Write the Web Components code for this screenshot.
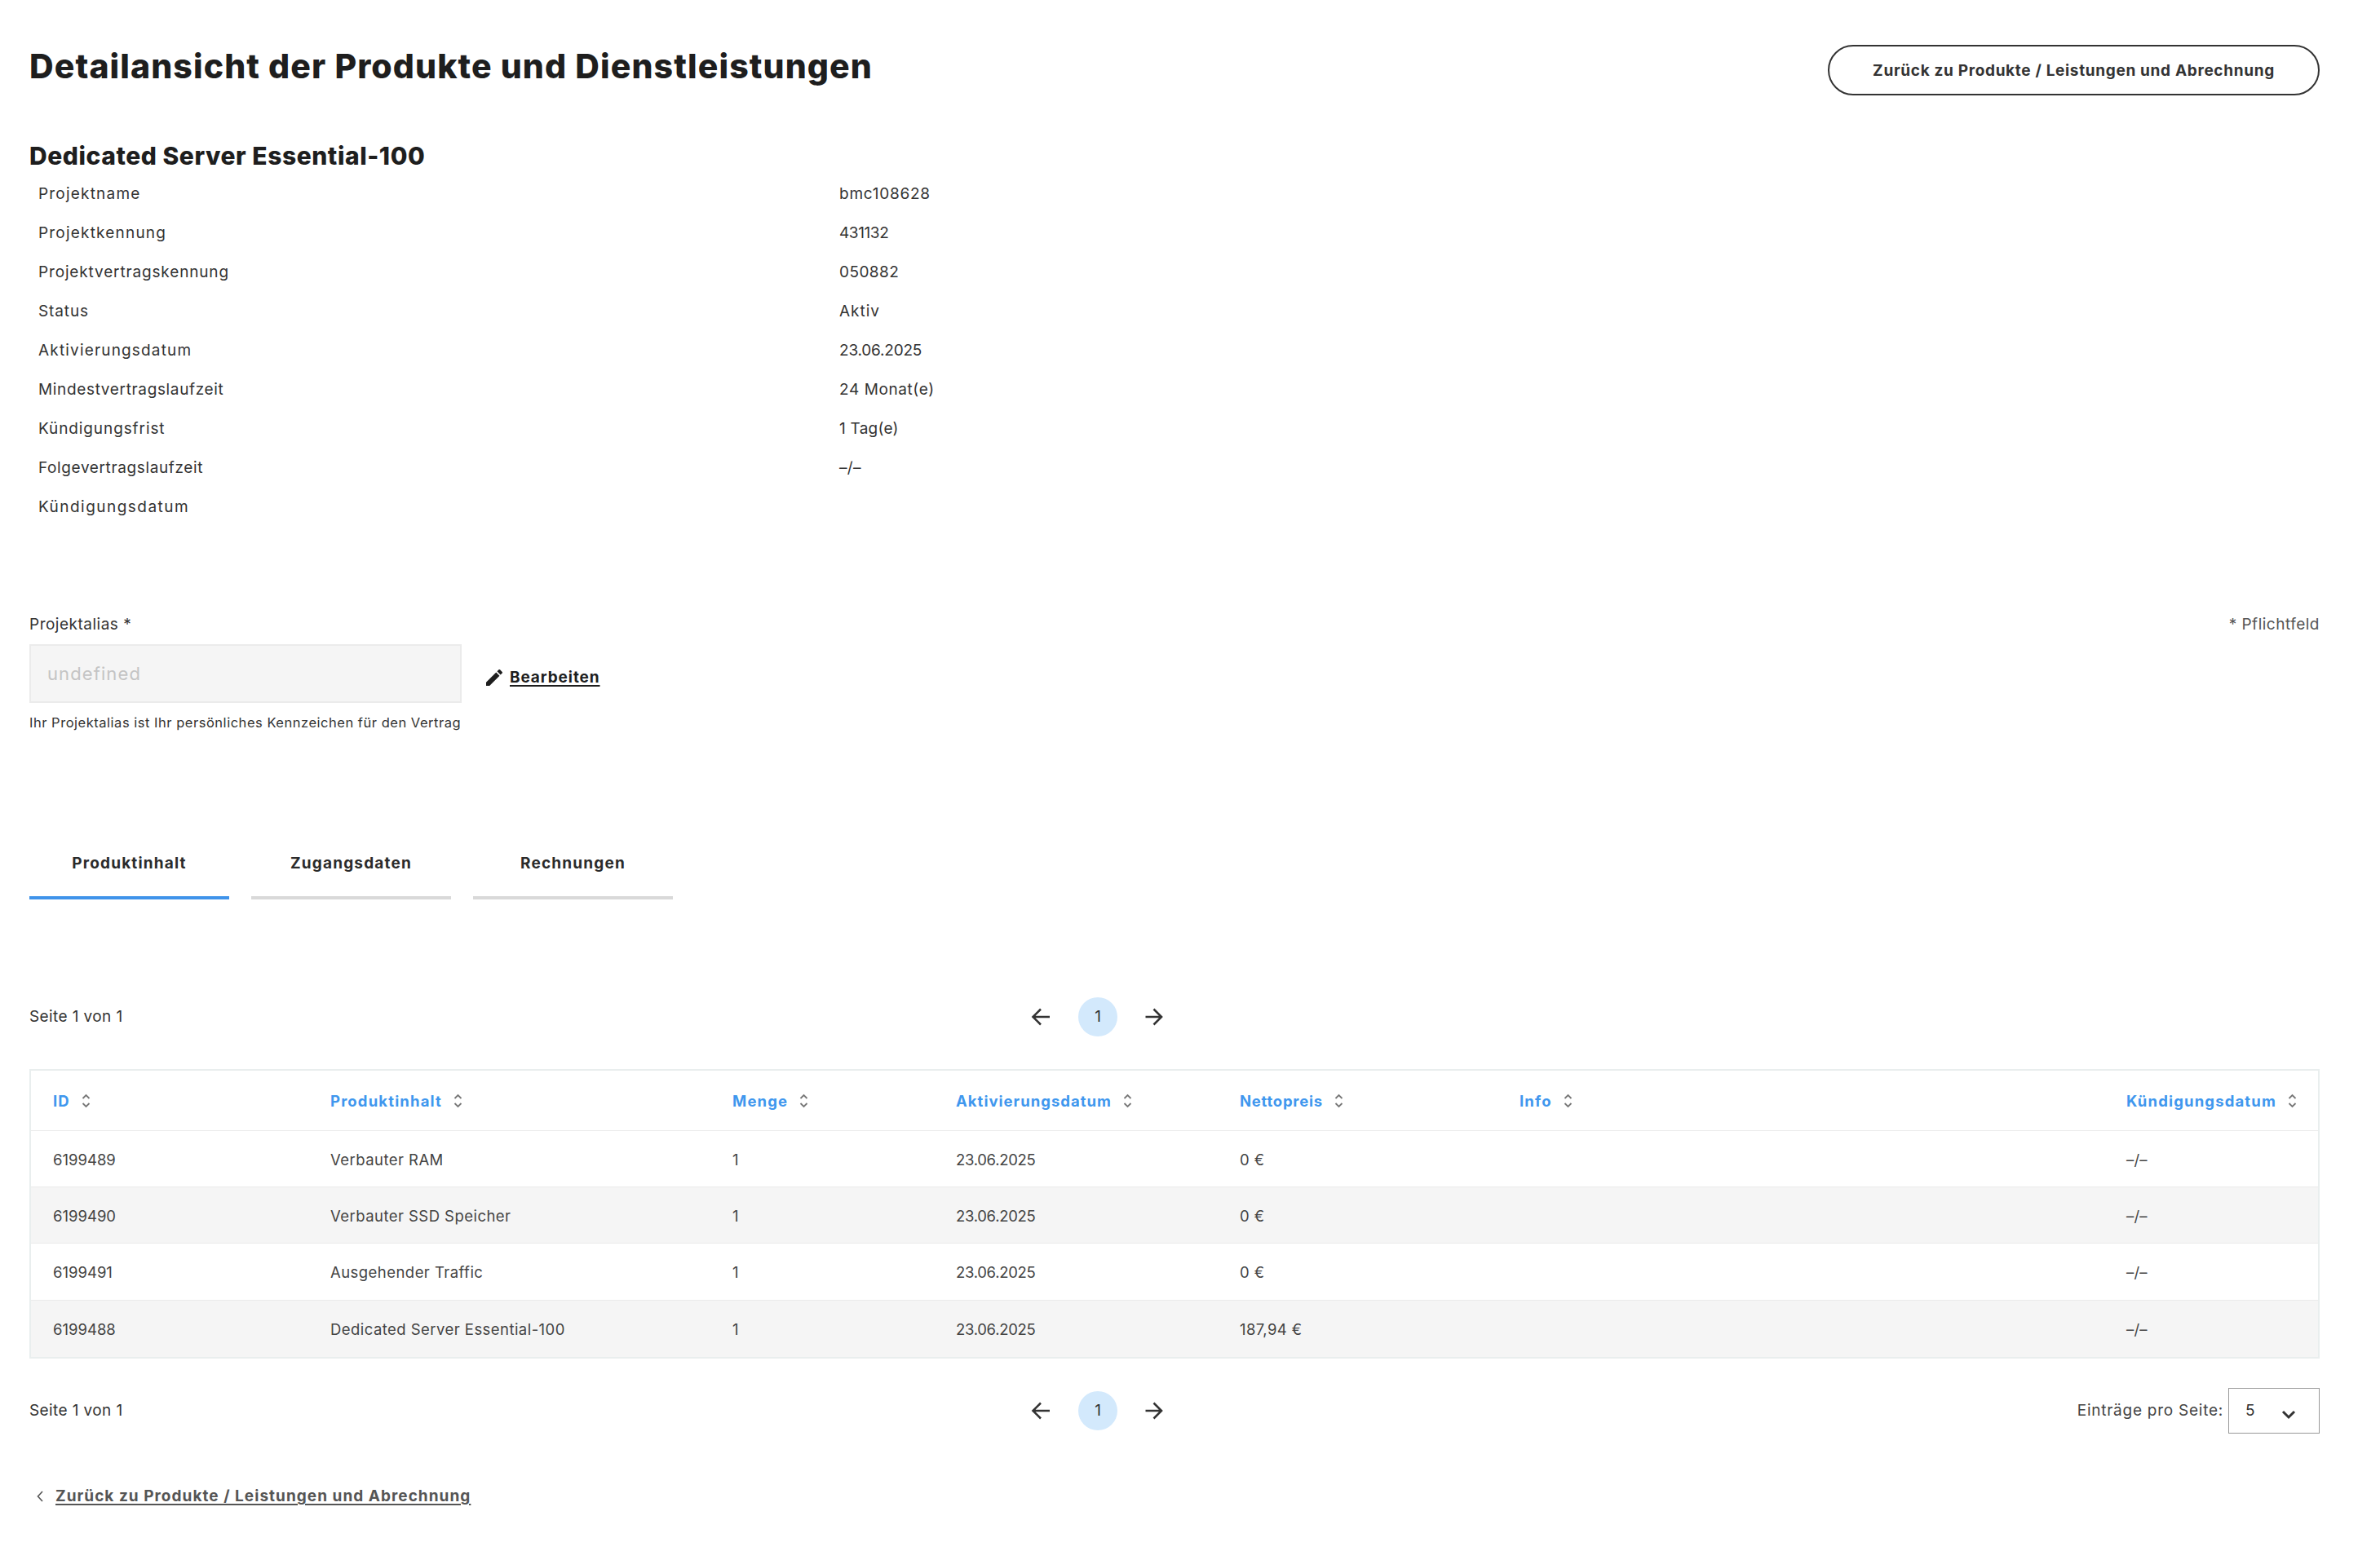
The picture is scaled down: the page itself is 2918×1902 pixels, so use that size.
<!doctype html>
<html lang="de"><head><meta charset="utf-8"><title>Detailansicht</title>
<style>
html,body{margin:0;background:#fff}
body{font:400 19px/30px Inter,"Liberation Sans",sans-serif;color:#333}
</style></head>
<body>
<app-page>
  <page-header slot="header" label="Zurück zu Produkte / Leistungen und Abrechnung">Detailansicht der Produkte und Dienstleistungen</page-header>
  <detail-list heading="Dedicated Server Essential-100">
    <detail-row label="Projektname" ll="1.2" lv=".75">bmc108628</detail-row>
    <detail-row label="Projektkennung" ll="1.2" lv="-.4">431132</detail-row>
    <detail-row label="Projektvertragskennung" ll=".85" lv=".45">050882</detail-row>
    <detail-row label="Status" ll=".9" lv="1">Aktiv</detail-row>
    <detail-row label="Aktivierungsdatum" ll="1.17" lv="-.2">23.06.2025</detail-row>
    <detail-row label="Mindestvertragslaufzeit" ll=".65" lv=".6">24 Monat(e)</detail-row>
    <detail-row label="Kündigungsfrist" ll=".9" lv=".25">1 Tag(e)</detail-row>
    <detail-row label="Folgevertragslaufzeit" ll=".62" lv=".3">–/–</detail-row>
    <detail-row label="Kündigungsdatum" ll="1.47" lv="0"></detail-row>
  </detail-list>
  <alias-field></alias-field>
  <tab-bar>
    <tab-item active>Produktinhalt</tab-item>
    <tab-item>Zugangsdaten</tab-item>
    <tab-item>Rechnungen</tab-item>
  </tab-bar>
  <pager-bar style="margin-top:120px"></pager-bar>
  <data-table></data-table>
  <pager-bar style="margin-top:36px" sizer></pager-bar>
  <back-link>Zurück zu Produkte / Leistungen und Abrechnung</back-link>
</app-page>
<script>
const def=(name,html,init)=>customElements.define(name,class extends HTMLElement{
  constructor(){super();this.attachShadow({mode:'open'}).innerHTML=typeof html==='function'?html(this):html}
  connectedCallback(){if(init&&!this._i){this._i=1;init(this,this.shadowRoot)}}
});
def('app-page',`<style>:host{display:block;box-sizing:border-box;width:2918px;padding:0 74px 40px 36px}</style><slot name="header"></slot><slot></slot>`);
def('page-header',`<style>
:host{display:flex;justify-content:space-between;align-items:flex-start;padding-top:55px;height:62px}
h1{margin:0;font:800 41px/52px Inter,sans-serif;letter-spacing:1.09px;color:#1e1e1e}
button{box-sizing:border-box;width:603px;height:62px;border:2px solid #333;border-radius:31px;background:#fff;color:#333;font:700 19px/1 Inter,sans-serif;letter-spacing:.67px;padding:1px 0 0}
</style><h1><slot></slot></h1><button></button>`,(e,s)=>{s.querySelector('button').textContent=e.getAttribute('label')});
def('detail-list',`<style>
:host{display:block;margin-top:55px}
h2{margin:0;height:41px;font:800 30px/39px Inter,sans-serif;letter-spacing:.55px;color:#1e1e1e}
</style><h2></h2><slot></slot>`,(e,s)=>{s.querySelector('h2').textContent=e.getAttribute('heading')});
def('detail-row',`<style>
:host{display:grid;grid-template-columns:982px 1fr;height:48px;align-items:center;padding-left:11px;color:#333}
span{padding-top:1px}
</style><span></span><span class="v"><slot></slot></span>`,(e,s)=>{const a=s.querySelector('span');a.textContent=e.getAttribute('label');a.style.letterSpacing=e.getAttribute('ll')+'px';s.querySelector('.v').style.letterSpacing=e.getAttribute('lv')+'px'});
def('alias-field',`<style>
:host{display:block;margin-top:105px}
.top{display:flex;justify-content:space-between;height:30px;line-height:31px;letter-spacing:.5px;margin-bottom:10px}
.top i{font-style:normal;color:#555}
.row{display:flex;align-items:center;gap:30px}
.inp{box-sizing:border-box;width:530px;height:72px;background:#f5f5f5;border:2px solid #ebebeb;padding:0 20px;font-size:22px;line-height:68px;letter-spacing:1.1px;color:#c4c4c4;margin:0}
a{display:flex;align-items:center;gap:9px;margin-top:10px;font-weight:700;color:#1e1e1e;letter-spacing:.9px}
a span{text-decoration:underline;text-underline-offset:3px;text-decoration-thickness:2px}
svg{width:20px;height:20px;fill:#1e1e1e;display:block}
.hint{font-size:16.500px;letter-spacing:.52px;line-height:30px;height:30px;margin-top:9px;color:#333}
</style>
<div class="top"><span>Projektalias *</span><i>* Pflichtfeld</i></div>
<div class="row"><div class="inp">undefined</div><a><svg viewBox="3 3 18 18"><path d="M3 17.25V21h3.75L17.81 9.94l-3.75-3.75L3 17.25zM20.71 7.04c.39-.39.39-1.02 0-1.41l-2.34-2.34c-.39-.39-1.02-.39-1.41 0l-1.83 1.83 3.75 3.75 1.83-1.83z"/></svg><span>Bearbeiten</span></a></div>
<div class="hint">Ihr Projektalias ist Ihr persönliches Kennzeichen für den Vertrag</div>`);
def('tab-bar',`<style>:host{display:flex;gap:27px;margin-top:119px}</style><slot></slot>`);
def('tab-item',`<style>
:host{display:flex;box-sizing:border-box;width:245px;height:83px;padding-bottom:1px;justify-content:center;align-items:center;border-bottom:4px solid #d9d9d9;font-weight:700;letter-spacing:1.17px;color:#2b2b2b}
:host([active]){border-bottom-color:#3f93ea}
</style><slot></slot>`);
const arrow=d=>`<svg viewBox="0 0 24 24" width="24" height="24"><path d="${d}" fill="none" stroke="#333" stroke-width="2.6"/></svg>`;
def('pager-bar',e=>`<style>
:host{display:grid;grid-template-columns:1224px auto 1fr;align-items:center;min-height:48px}
.s{letter-spacing:.4px;color:#333}
.w{display:flex;align-items:center;gap:30px}
.w>div{width:32px;height:48px;display:flex;align-items:center;justify-content:center}
.w>b{width:48px;height:48px;border-radius:50%;background:#d3e9fc;font-weight:400;display:flex;align-items:center;justify-content:center;color:#333}
.r{justify-self:end;display:flex;align-items:center;gap:6px;color:#444;letter-spacing:.75px}
.sel{box-sizing:border-box;width:112px;height:56px;border:1px solid #999;display:flex;align-items:center;justify-content:space-between;padding:0 28px 0 20px;letter-spacing:0;color:#333}
</style>
<div class="s">Seite 1 von 1</div>
<div class="w"><div>${arrow('M23 12H3M12 2.500 2.500 12l9.500 9.500')}</div><b>1</b><div>${arrow('M.5 12h19.500M10.500 2.500 20 12l-9.500 9.500')}</div></div>
${e.hasAttribute('sizer')?`<div class="r"><span>Einträge pro Seite:</span><div class="sel"><span>5</span><svg width="18" height="12" viewBox="0 0 18 12" style="margin-top:10px"><path d="M2 2l7 7 7-7" fill="none" stroke="#333" stroke-width="3"/></svg></div></div>`:''}`);
const sort=`<svg class="so" width="11" height="18" viewBox="0 0 11 18"><path d="M1.500 6 5.500 2 9.500 6M1.500 12l4 4 4-4" fill="none" stroke="#777" stroke-width="1.800"/></svg>`;
const cols=[["ID",340,1.15],["Produktinhalt",493,1.15],["Menge",274,1.15],["Aktivierungsdatum",348,1.02],["Nettopreis",343,.75],["Info",744,1.15],["Kündigungsdatum",262,1.15]];
const rows=[["6199489","Verbauter RAM","1","23.06.2025","0 €","","–/–"],["6199490","Verbauter SSD Speicher","1","23.06.2025","0 €","","–/–"],["6199491","Ausgehender Traffic","1","23.06.2025","0 €","","–/–"],["6199488","Dedicated Server Essential-100","1","23.06.2025","187,94 €","","–/–"]];
const hs=[69,69,70,69];
const ls=[0,.45,.5,-.3,.4,0,.2];
def('data-table',`<style>
:host{display:block;margin-top:40px}
table{box-sizing:border-box;width:2808px;table-layout:fixed;border-collapse:separate;border-spacing:0;border:2px solid #e9eeee}
th,td{padding:0 0 0 27px;text-align:left;box-sizing:border-box;white-space:nowrap}
th{height:74px;font-size:18.500px;font-weight:700;color:#3f97ee;border-bottom:1px solid #ebebeb}
th span{display:inline-flex;align-items:center;gap:14px}
td{font-size:18.500px;color:#444;padding-top:1px;border-bottom:1px solid #ebebeb}
tr:last-child td{border-bottom:0}
tbody tr:nth-child(even) td{background:#f5f5f5}
.so{display:block}
</style><table><colgroup>${cols.map(c=>`<col style="width:${c[1]}px">`).join('')}</colgroup><thead><tr>${cols.map(c=>`<th style="letter-spacing:${c[2]}px"><span>${c[0]}${sort}</span></th>`).join('')}</tr></thead><tbody>${rows.map((r,i)=>`<tr>${r.map((v,j)=>`<td style="height:${hs[i]}px;letter-spacing:${ls[j]}px">${v}</td>`).join('')}</tr>`).join('')}</tbody></table>`);
def('back-link',`<style>
:host{display:flex;align-items:center;height:30px;margin-top:62px;padding-left:9px;gap:15px;font-weight:700;color:#555;letter-spacing:1.03px}
span{text-decoration:underline;text-underline-offset:3px;text-decoration-thickness:2px}
</style><svg width="8" height="14" viewBox="0 0 8 14"><path d="M7 1 1.500 7 7 13" fill="none" stroke="#555" stroke-width="1.600"/></svg><span><slot></slot></span>`);
</script>
</body></html>
